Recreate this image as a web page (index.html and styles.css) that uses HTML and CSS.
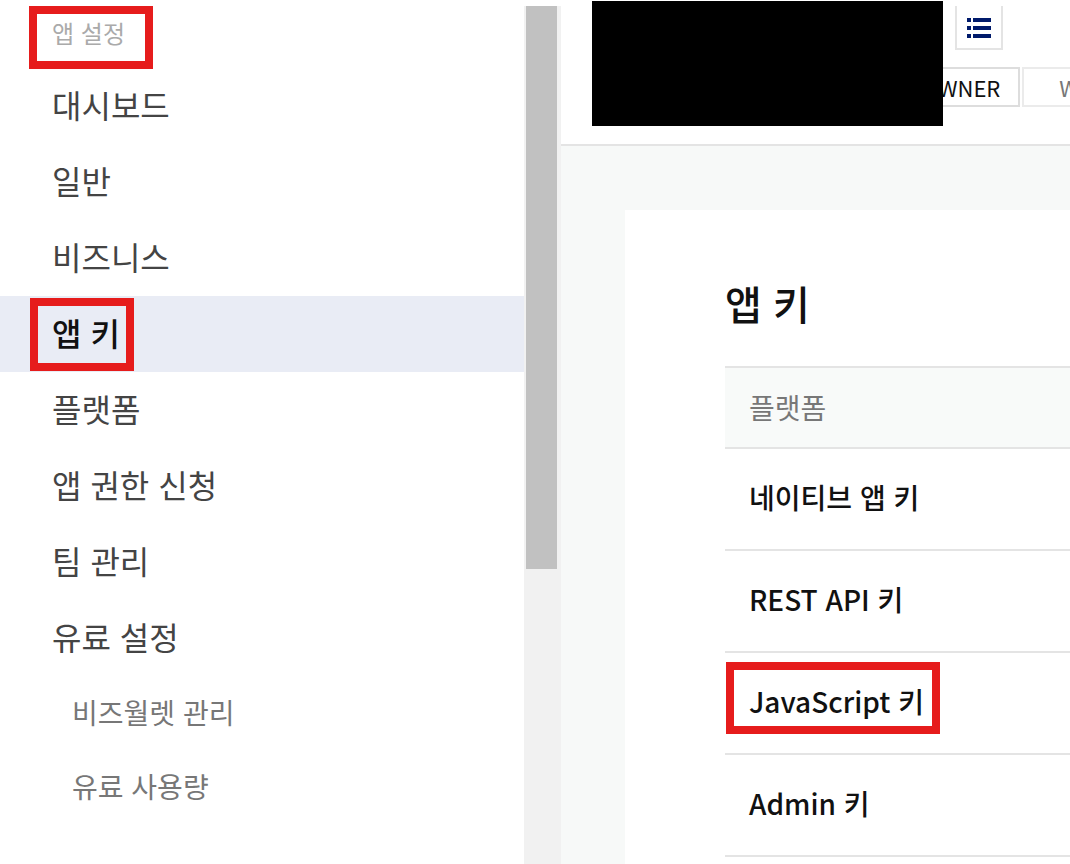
FILE: index.html
```
<!DOCTYPE html>
<html lang="ko">
    <head>
        <meta charset="utf-8">
        <title>앱 키</title>
        <link rel="stylesheet" href="styles.css">
    </head>
    <body>
        <div class="page">
            <nav class="sidebar">
                <h2 class="menu-title"><span class="mark mark-title">앱 설정</span></h2>
                <ul class="menu">
                    <li><a href="#">대시보드</a></li>
                    <li><a href="#">일반</a></li>
                    <li><a href="#">비즈니스</a></li>
                    <li><a href="#" class="active"><span class="mark mark-menu">앱 키</span></a></li>
                    <li><a href="#">플랫폼</a></li>
                    <li><a href="#">앱 권한 신청</a></li>
                    <li><a href="#">팀 관리</a></li>
                    <li><a href="#">유료 설정</a>
                        <ul class="submenu">
                            <li><a href="#">비즈월렛 관리</a></li>
                            <li><a href="#">유료 사용량</a></li>
                        </ul>
                    </li>
                </ul>
            </nav>
            <div class="scrollbar"><div class="thumb"></div></div>
            <div class="content">
                <header class="app-header">
                    <div class="app-cover"></div>
                    <button type="button" class="list-button" aria-label="앱 목록">
                        <svg width="24" height="20" viewBox="0 0 24 20" fill="#001a6b">
                            <path d="M0 0h4v4H0zM6 0h18v4H6zM0 8h4v4H0zM6 8h18v4H6zM0 16h4v4H0zM6 16h18v4H6z"/>
                        </svg>
                    </button>
                    <div class="badges">
                        <span class="badge owner">OWNER</span>
                        <span class="badge web">W</span>
                    </div>
                </header>
                <main class="body">
                    <section class="card">
                        <h1>앱 키</h1>
                        <table class="keys">
                            <thead>
                                <tr><th scope="col">플랫폼</th></tr>
                            </thead>
                            <tbody>
                                <tr><td>네이티브 앱 키</td></tr>
                                <tr><td>REST API 키</td></tr>
                                <tr><td><span class="mark mark-key">JavaScript 키</span></td></tr>
                                <tr><td>Admin 키</td></tr>
                            </tbody>
                        </table>
                    </section>
                </main>
            </div>
        </div>
    </body>
</html>
```
FILE: styles.css
```
*
{
    box-sizing: border-box;
}
body
{
    margin: 0;
    background-color: #fff;
    color: #111;
    font-family: "Noto Sans CJK KR", "Noto Sans", sans-serif;
}
.page
{
    display: flex;
    height: 100vh;
    overflow: hidden;
}

/* left menu */
.sidebar
{
    flex: 0 0 524px;
}
.menu-title
{
    margin: 0;
    padding: 15px 52px 17px;
    font-size: 24px;
    font-weight: 400;
    line-height: 36px;
    color: #aaa;
}
.menu, .submenu
{
    list-style: none;
    margin: 0;
    padding: 0;
}
.menu a
{
    display: block;
    padding: 12px 52px 16px;
    font-size: 32px;
    line-height: 48px;
    color: #444;
    text-decoration: none;
}
.menu a.active
{
    background-color: #e9ecf5;
    color: #111;
    font-weight: 500;
}
.menu .submenu a
{
    padding: 15px 72px 17px;
    font-size: 28px;
    line-height: 42px;
    color: #777;
}

.scrollbar
{
    flex: 0 0 37px;
    margin-top: 6px;
    padding: 0 4px 0 2px;
    background-color: #f1f1f1;
}
.thumb
{
    height: 563px;
    background-color: #c1c1c1;
}

/* right side */
.content
{
    flex: 1;
    min-width: 0;
    display: flex;
    flex-direction: column;
}
.app-header
{
    position: relative;
    padding: 6px 0 37px;
    border-bottom: 2px solid #e4e4e4;
}
.app-cover
{
    position: absolute;
    z-index: 1;
    top: 1px;
    left: 31px;
    width: 351px;
    height: 125px;
    background-color: #000;
}
.list-button
{
    display: flex;
    margin: 0 0 17px 394px;
    padding: 12px 10px 10px;
    border: 2px solid #e4e4e4;
    border-top: 0;
    background-color: #fff;
}
.badges
{
    display: flex;
    gap: 2px;
    margin-left: 341px;
    overflow: hidden;
}
.badge
{
    padding: 3px 18px;
    border: 2px solid #ddd;
    font-size: 22px;
    line-height: 30px;
}
.web
{
    padding-left: 35px;
    border-color: #ebebeb;
    color: #777;
}
.body
{
    flex: 1;
    padding: 64px 0 0 64px;
    background-color: #f7f9f8;
}
.card
{
    height: 100%;
    padding: 64px 0 0 100px;
    background-color: #fff;
}
h1
{
    margin: 0 0 34px;
    font-size: 40px;
    font-weight: 500;
    line-height: 58px;
}
.keys
{
    width: 100%;
    border-spacing: 0;
    border-top: 2px solid #e4e4e4;
    font-size: 28px;
    line-height: 42px;
    text-align: left;
}
.keys th
{
    padding: 18px 24px 19px;
    border-bottom: 2px solid #e4e4e4;
    background-color: #f8faf9;
    color: #777;
    font-weight: 400;
}
.keys td
{
    padding: 27px 24px 31px;
    border-bottom: 2px solid #e4e4e4;
    font-weight: 500;
}

/* red highlight boxes */
.mark
{
    position: relative;
    display: inline-block;
}
.mark::after
{
    content: "";
    position: absolute;
    border: 8px solid #e61c1c;
}
.mark-title::after
{
    inset: -9px -28px -18px -23px;
}
.mark-menu::after
{
    inset: -10px -14px -15px -22px;
}
.mark-key::after
{
    inset: -18px -16px -12px -23px;
}
```
